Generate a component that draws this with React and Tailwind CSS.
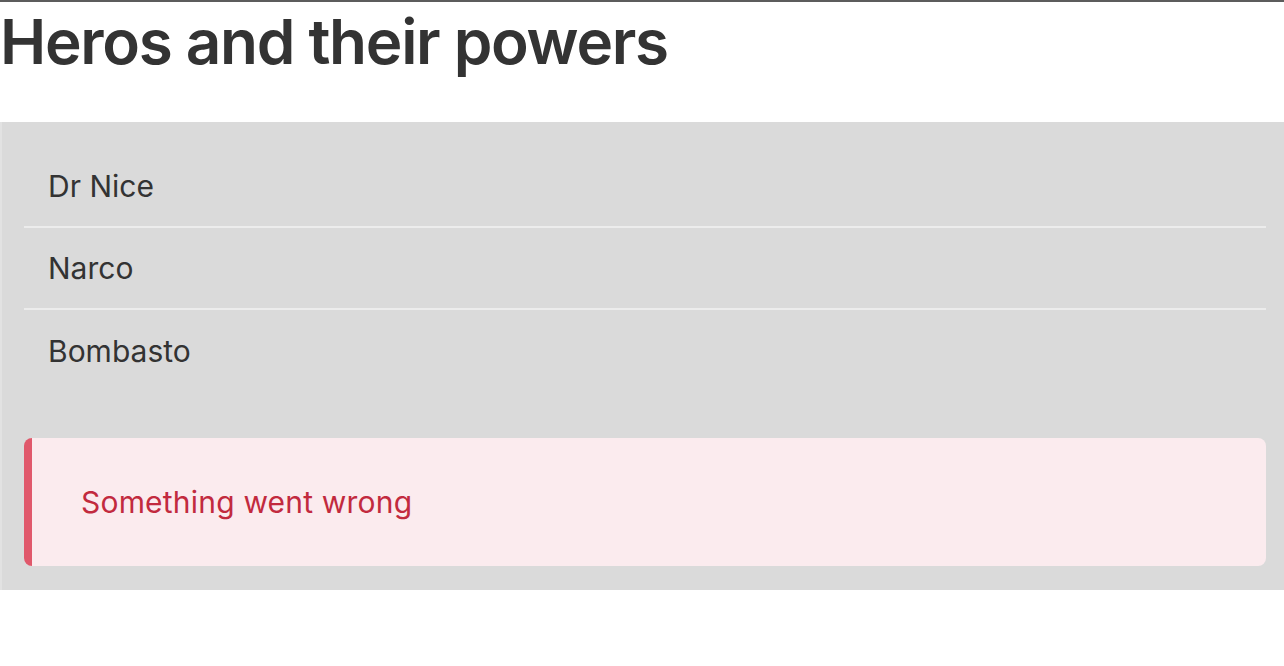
import React from "react";

const heroes = ["Dr Nice", "Narco", "Bombasto"];

export default function App() {
    return (
        <div className="min-h-screen bg-white border-t-2 border-[#5c5c5c] text-[#333333] font-['Inter',_sans-serif]">
            <h1 className="text-[62px] leading-[80px] font-semibold tracking-[-1.3px] mb-[40px]">Heros and their powers</h1>

            <div className="bg-[#dadada] border-l-2 border-[#e2e2e2] pl-[22px] pr-[18px] pt-6 pb-6">
                <ul>
                    {heroes.map((name, i) => (
                        <li
                            key={name}
                            className={
                                "px-6 h-[82px] flex items-center text-[30px] " +
                                (i < heroes.length - 1 ? "border-b-2 border-[#ececec]" : "")
                            }
                        >
                            {name}
                        </li>
                    ))}
                </ul>

                <div className="mt-[46px] h-[128px] flex items-center pl-[49px] bg-[#fbebee] border-l-8 border-[#e0586b] rounded-lg text-[30px] tracking-[0.2px] text-[#c22a3e]">
                    Something went wrong
                </div>
            </div>
        </div>
    );
}
